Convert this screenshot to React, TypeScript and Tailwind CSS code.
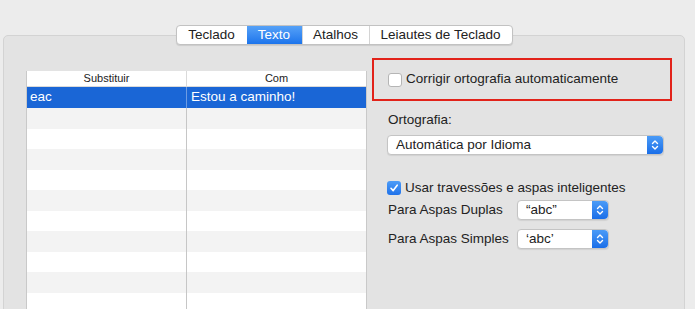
const font = { fontFamily: '"Liberation Sans", Arial, sans-serif' }

function Stepper() {
  return (
    <div className="flex h-full w-[16px] items-center justify-center rounded-r-[4px] bg-gradient-to-b from-[#4a9bf7] to-[#1a6ee8]">
      <svg width="8" height="12" viewBox="0 0 8 12" fill="none" stroke="white" strokeWidth="1.4" strokeLinecap="round" strokeLinejoin="round">
        <path d="M1.5 4.5 L4 2 L6.5 4.5" />
        <path d="M1.5 7.5 L4 10 L6.5 7.5" />
      </svg>
    </div>
  )
}

function Popup({ label, width }: { label: string; width: string }) {
  return (
    <div className={`flex h-[20px] ${width} items-stretch rounded-[4px] border border-[#c4c4c4] bg-white shadow-[0_1px_1px_rgba(0,0,0,0.08)]`}>
      <div className="flex flex-1 items-center pl-[8px] text-[13.5px] text-[#222]">{label}</div>
      <Stepper />
    </div>
  )
}

const tabs = ['Teclado', 'Texto', 'Atalhos', 'Leiautes de Teclado']
const tabWidths = ['w-[70px]', 'w-[55px]', 'w-[67px]', 'w-[143px]']

export default function App() {
  const rows = Array.from({ length: 11 })
  return (
    <div style={font} className="h-[309px] w-[695px] overflow-hidden bg-[#ececec] pt-[25px]">
      <div className="relative z-10 flex justify-center pr-[7px]">
        <div className="flex h-[20px] overflow-hidden rounded-[4px] border border-[#c2c2c2] bg-white shadow-[0_1px_1px_rgba(0,0,0,0.1)]">
          {tabs.map((t, i) => (
            <div
              key={t}
              className={`flex items-center justify-center text-[13.5px] ${tabWidths[i]} ${
                i === 1
                  ? 'bg-gradient-to-b from-[#55a1f7] to-[#1b74ec] text-white'
                  : 'text-[#222]'
              } ${i > 1 ? 'border-l border-[#d4d4d4]' : ''}`}
            >
              {t}
            </div>
          ))}
        </div>
      </div>

      <div className="-mt-[10px] ml-[3px] h-[300px] w-[682px] rounded-t-[5px] border border-[#d3d3d3] bg-[#e3e3e3] pl-[22px] pt-[22px]">
        <div className="flex gap-[5px]">
          {/* substitution table */}
          <div className="mt-[13px] w-[341px] border-x border-[#c9c9c9] bg-white">
            <div className="flex h-[16px] border-b border-[#dadada] text-[11px] text-[#222]">
              <div className="flex w-[159px] items-center justify-center">Substituir</div>
              <div className="flex flex-1 items-center justify-center border-l border-[#dadada]">Com</div>
            </div>
            <div className="flex h-[21px] bg-[#1a66d6] text-[13.5px] text-white">
              <div className="flex w-[159px] items-center pl-[3px]">eac</div>
              <div className="flex flex-1 items-center border-l border-[#6d9ce3] pl-[4px]">Estou a caminho!</div>
            </div>
            {rows.map((_, i) => (
              <div key={i} className={`flex h-[20.5px] ${i % 2 === 0 ? 'bg-[#f3f3f3]' : 'bg-white'}`}>
                <div className="w-[159px]" />
                <div className="flex-1 border-l border-[#c6c6c6]" />
              </div>
            ))}
          </div>

          {/* options */}
          <div className="flex w-[300px] flex-col">
            <div className="flex h-[43px] items-center border-2 border-[#e2231a] pl-[14px]">
              <div className="h-[14px] w-[14px] rounded-[3px] border border-[#b5b5b5] bg-white" />
              <span className="ml-[4px] text-[13.5px] text-[#222]">Corrigir ortografia automaticamente</span>
            </div>
            <div className="ml-[16px] mt-[11px] text-[13.5px] leading-[16px] text-[#222]">Ortografia:</div>
            <div className="ml-[15px] mt-[7px]">
              <Popup label="Automática por Idioma" width="w-[277px]" />
            </div>
            <div className="ml-[15px] mt-[23px] flex items-center">
              <div className="flex h-[14px] w-[14px] items-center justify-center rounded-[3px] bg-gradient-to-b from-[#4d9cf7] to-[#1f72ea]">
                <svg width="10" height="10" viewBox="0 0 10 10" fill="none" stroke="white" strokeWidth="1.6" strokeLinecap="round" strokeLinejoin="round">
                  <path d="M2 5.3 L4.2 7.6 L8.2 2.2" />
                </svg>
              </div>
              <span className="ml-[4px] text-[13.5px] text-[#222]">Usar travessões e aspas inteligentes</span>
            </div>
            <div className="ml-[16px] mt-[2px] flex items-center">
              <span className="w-[129px] text-[13.5px] text-[#222]">Para Aspas Duplas</span>
              <Popup label="“abc”" width="w-[92px]" />
            </div>
            <div className="ml-[16px] mt-[8px] flex items-center">
              <span className="w-[129px] text-[13.5px] text-[#222]">Para Aspas Simples</span>
              <Popup label="‘abc’" width="w-[92px]" />
            </div>
          </div>
        </div>
      </div>
    </div>
  )
}
